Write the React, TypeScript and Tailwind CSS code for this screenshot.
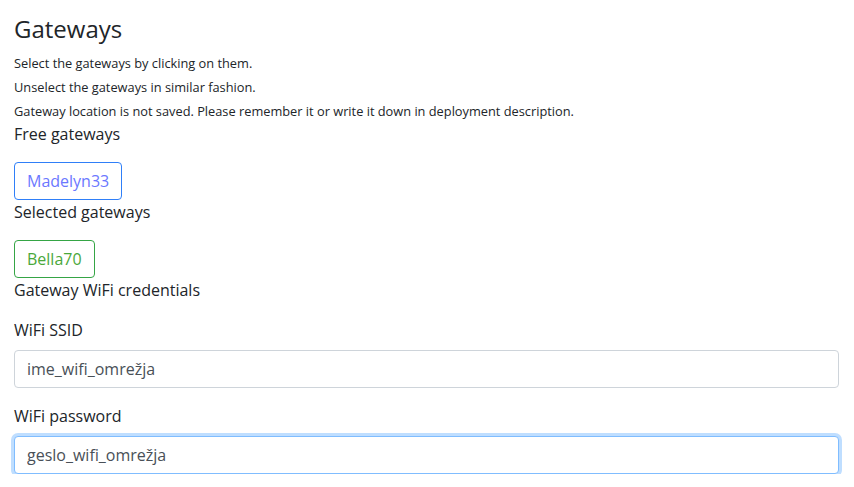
import React from 'react';

const App: React.FC = () => {
  return (
    <div className="pl-[14px] pr-[15px] text-[#212529] font-['Open_Sans',sans-serif]">
      <h2 className="pt-[14px] text-[24px] leading-[29px] font-normal mb-[8px]">Gateways</h2>
      <div className="text-[12.8px] leading-[24px]">
        <p>Select the gateways by clicking on them.</p>
        <p>Unselect the gateways in similar fashion.</p>
        <p>Gateway location is not saved. Please remember it or write it down in deployment description.</p>
      </div>

      <p className="text-[16px] leading-[24px] -mt-[1px] mb-[16px]">Free gateways</p>
      <div className="flex">
        <button className="h-[38px] px-[12px] border border-[#2f7ff8] rounded-[4px] text-[#6b78ff] text-[16px] leading-[24px] bg-white">
          Madelyn33
        </button>
      </div>

      <p className="text-[16px] leading-[24px] mb-[16px]">Selected gateways</p>
      <div className="flex">
        <button className="h-[38px] px-[12px] border border-[#35a545] rounded-[4px] text-[#4aa83a] text-[16px] leading-[24px] bg-white">
          Bella70
        </button>
      </div>

      <p className="text-[16px] leading-[24px] mb-[16px]">Gateway WiFi credentials</p>

      <div className="flex flex-col gap-[8px] mb-[16px]">
        <label className="text-[16px] leading-[24px]">WiFi SSID</label>
        <input
          readOnly
          value="ime_wifi_omrežja"
          className="h-[38px] w-full px-[12px] border border-[#ced4da] rounded-[4px] text-[16px] text-[#495057] bg-white outline-none"
        />
      </div>

      <div className="flex flex-col gap-[8px]">
        <label className="text-[16px] leading-[24px]">WiFi password</label>
        <input
          readOnly
          value="geslo_wifi_omrežja"
          className="h-[38px] w-full px-[12px] border border-[#80bdff] rounded-[4px] text-[16px] text-[#495057] bg-white outline-none shadow-[0_0_0_3px_rgba(0,123,255,0.25)]"
        />
      </div>
    </div>
  );
};

export default App;
